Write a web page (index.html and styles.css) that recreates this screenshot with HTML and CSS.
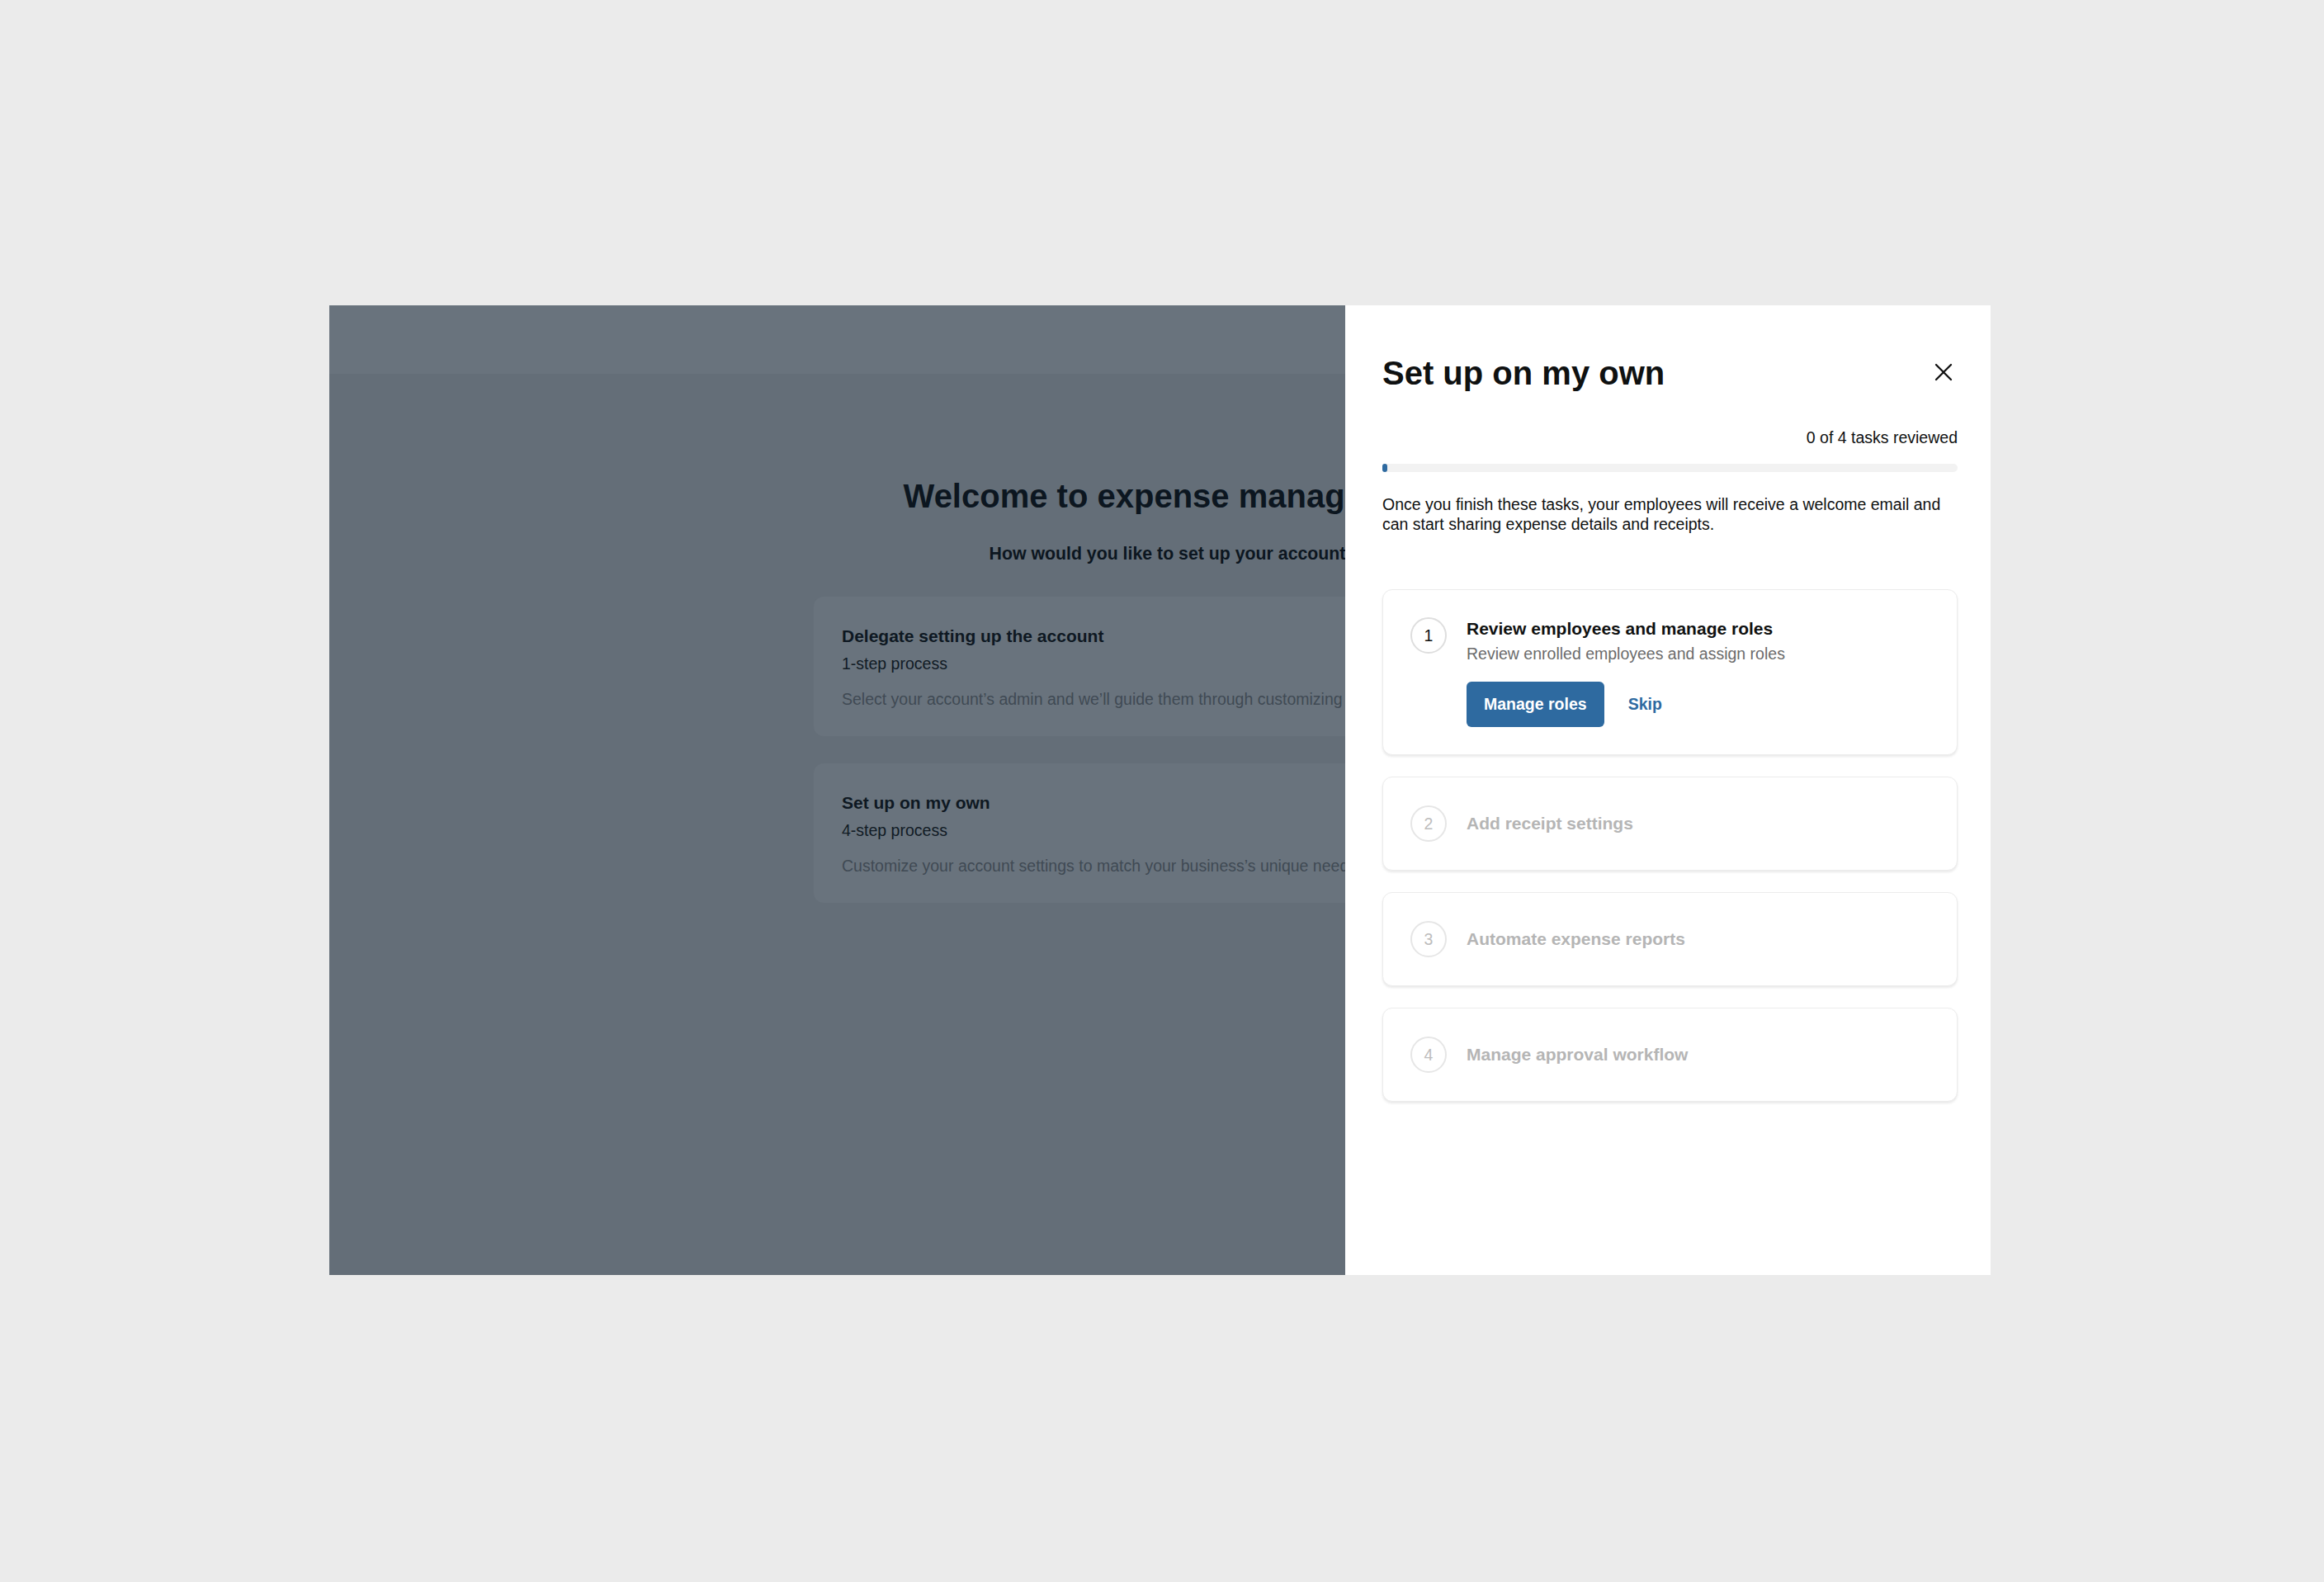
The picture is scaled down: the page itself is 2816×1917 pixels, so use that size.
FILE: index.html
```html
<!DOCTYPE html>
<html lang="en">
<head>
<meta charset="utf-8">
<title>Set up on my own</title>
<link rel="stylesheet" href="styles.css">
</head>
<body>
  <div class="frame">
    <div class="page">
      <div class="topbar"></div>
      <main class="welcome">
        <h1 class="welcome-title">Welcome to expense management</h1>
        <p class="welcome-question">How would you like to set up your account?</p>
        <div class="options">
          <div class="option">
            <h2 class="option-title">Delegate setting up the account</h2>
            <p class="option-steps">1-step process</p>
            <p class="option-desc">Select your account’s admin and we’ll guide them through customizing the account.</p>
          </div>
          <div class="option">
            <h2 class="option-title">Set up on my own</h2>
            <p class="option-steps">4-step process</p>
            <p class="option-desc">Customize your account settings to match your business’s unique needs.</p>
          </div>
        </div>
      </main>
    </div>

    <aside class="drawer">
      <div class="drawer-header">
        <h2 class="drawer-title">Set up on my own</h2>
        <svg class="close" viewBox="0 0 24 24" aria-label="Close">
          <path d="M3 3 L21 21 M21 3 L3 21" stroke="#111111" stroke-width="2.3" stroke-linecap="round" fill="none"/>
        </svg>
      </div>
      <div class="progress-label">0 of 4 tasks reviewed</div>
      <div class="progress"><div class="progress-fill"></div></div>
      <p class="intro">Once you finish these tasks, your employees will receive a welcome email and can start sharing expense details and receipts.</p>

      <div class="tasks">
        <div class="task">
          <div class="num">1</div>
          <div class="task-body">
            <div class="task-title">Review employees and manage roles</div>
            <div class="task-sub">Review enrolled employees and assign roles</div>
            <div class="actions">
              <button class="btn">Manage roles</button>
              <span class="link">Skip</span>
            </div>
          </div>
        </div>
        <div class="task task-disabled">
          <div class="num">2</div>
          <div class="task-title">Add receipt settings</div>
        </div>
        <div class="task task-disabled">
          <div class="num">3</div>
          <div class="task-title">Automate expense reports</div>
        </div>
        <div class="task task-disabled">
          <div class="num">4</div>
          <div class="task-title">Manage approval workflow</div>
        </div>
      </div>
    </aside>
  </div>
</body>
</html>
```

FILE: styles.css
```css
* {
  box-sizing: border-box;
}

body {
  margin: 0;
  background: #ebebeb;
  font-family: "Liberation Sans", Arial, sans-serif;
}

.frame {
  position: relative;
  width: 2013px;
  height: 1175px;
  margin: 370px 0 0 399px;
  overflow: hidden;
}

/* ---------- dimmed page underneath ---------- */
.page {
  height: 100%;
  background: #646e78;
  display: flex;
  flex-direction: column;
}

.topbar {
  height: 83px;
  flex: none;
  background: #69737d;
}

.welcome {
  padding: 122px 0 0 31px;
  display: flex;
  flex-direction: column;
  align-items: center;
}

.welcome-title {
  margin: 0;
  font-size: 40px;
  line-height: 52px;
  font-weight: 700;
  color: #0c1620;
  white-space: nowrap;
}

.welcome-question {
  margin: 30px 0 0;
  font-size: 21.3px;
  line-height: 28px;
  font-weight: 700;
  color: #0c1620;
  white-space: nowrap;
}

.options {
  width: 870px;
  margin-top: 38px;
  display: flex;
  flex-direction: column;
  gap: 33px;
}

.option {
  background: #69737d;
  border-radius: 12px;
  padding: 34px 34px 32px;
}

.option-title {
  margin: 0;
  font-size: 21px;
  line-height: 28px;
  font-weight: 700;
  color: #0e1822;
}

.option-steps {
  margin: 6px 0 0;
  font-size: 19.5px;
  line-height: 26px;
  color: #111b25;
}

.option-desc {
  margin: 17px 0 0;
  font-size: 19.5px;
  line-height: 26px;
  color: #404a54;
  white-space: nowrap;
}

/* ---------- drawer ---------- */
.drawer {
  position: absolute;
  top: 0;
  right: 0;
  bottom: 0;
  width: 782px;
  background: #ffffff;
  padding: 56px 40px 0 45px;
  color: #0f1111;
}

.drawer-header {
  height: 52px;
  display: flex;
  align-items: center;
  justify-content: space-between;
}

.drawer-title {
  margin: 0;
  font-size: 40px;
  line-height: 52px;
  font-weight: 700;
  color: #0f1111;
}

.close {
  width: 24px;
  height: 24px;
  margin-right: 5px;
  margin-top: -2px;
}

.progress-label {
  margin-top: 39px;
  text-align: right;
  font-size: 19.5px;
  line-height: 26px;
}

.progress {
  margin-top: 19px;
  height: 10px;
  border-radius: 5px;
  background: #f2f2f2;
}

.progress-fill {
  width: 6px;
  height: 100%;
  border-radius: 3px;
  background: #2e6aa0;
}

.intro {
  margin: 27px 0 0;
  font-size: 19.5px;
  line-height: 24px;
}

.tasks {
  margin-top: 67px;
  display: flex;
  flex-direction: column;
  gap: 26px;
}

.task {
  display: flex;
  align-items: flex-start;
  gap: 24px;
  padding: 33px;
  border: 1px solid #ececec;
  border-radius: 12px;
  box-shadow: 0 2px 3px rgba(0, 0, 0, 0.09);
  background: #fff;
}

.task-disabled {
  align-items: center;
  padding-top: 34px;
  padding-bottom: 34px;
}

.num {
  flex: none;
  width: 44px;
  height: 44px;
  border-radius: 50%;
  border: 2px solid #dedede;
  display: flex;
  align-items: center;
  justify-content: center;
  font-size: 19.5px;
  color: #0f1111;
}

.task-title {
  font-size: 21px;
  line-height: 28px;
  font-weight: 700;
  color: #0f1111;
}

.task-sub {
  margin-top: 3px;
  font-size: 19.5px;
  line-height: 26px;
  color: #6b6b6b;
}

.task-disabled .num {
  border-color: #e6e6e6;
  color: #bdbdbd;
}

.task-disabled .task-title {
  color: #b5b5b5;
}

.actions {
  margin-top: 21px;
  display: flex;
  align-items: center;
  gap: 29px;
}

.btn {
  height: 55px;
  padding: 0 21px;
  border: none;
  border-radius: 6px;
  background: #2e6aa0;
  color: #ffffff;
  font-family: "Liberation Sans", Arial, sans-serif;
  font-size: 19.5px;
  font-weight: 700;
}

.link {
  color: #2e6aa0;
  font-size: 19.5px;
  font-weight: 700;
}
```
